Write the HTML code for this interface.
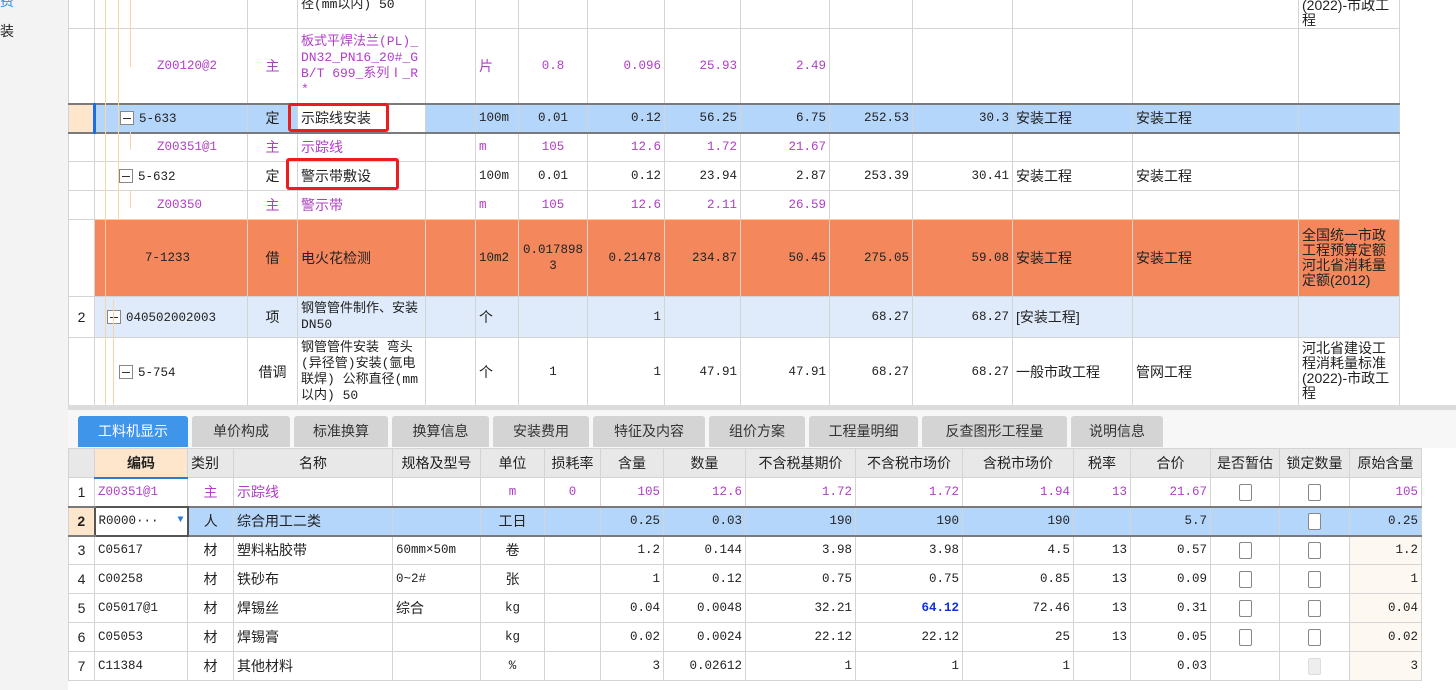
<!DOCTYPE html><html><head><meta charset="utf-8"><style>
*{margin:0;padding:0;box-sizing:border-box}
body{width:1456px;height:690px;overflow:hidden;background:#fff;position:relative;font-family:"Liberation Sans","Noto Sans CJK SC",sans-serif;font-size:14px;color:#222}
#left{position:absolute;left:0;top:0;width:68px;height:690px;background:#f3f3f3}
table{position:absolute;border-collapse:collapse;table-layout:fixed}
td{border:1px solid #d4d4d4;padding:0 3px;overflow:hidden;white-space:nowrap;line-height:16px;vertical-align:middle}
.n{text-align:right;font-family:"Liberation Mono","Noto Sans CJK SC",monospace;font-size:12.5px}
.c{text-align:center}
.w{white-space:normal;word-break:break-all;font-family:"Liberation Mono","Noto Sans CJK SC",monospace;font-size:13px}
.p{color:#b03ec6}
.sel td{background:#b5d6fb;border-top:2px solid #7a7a7a;border-bottom:2px solid #7a7a7a}
.or td{background:#f5875d}
.lb td{background:#dfeafb}
.box{display:inline-block;width:14px;height:14px;border:1px solid #888;background:#fff;vertical-align:middle;position:relative;margin-right:5px}
.box:after{content:"";position:absolute;left:2px;right:2px;top:6px;height:1px;background:#333}
.mono{font-family:"Liberation Mono","Noto Sans CJK SC",monospace;font-size:12.5px}
.cb{display:inline-block;width:13px;height:17px;border:1px solid #888;border-radius:2px;background:#fff;vertical-align:middle}
.vl{position:absolute;width:1px;background:#fcd3a5}
.red{position:absolute;border:3px solid #ee1c1c;border-radius:3px}
#tabs div{position:absolute;top:416px;height:31px;background:#d4d4d4;color:#333;font-size:14px;text-align:center;line-height:31px;border-radius:3px 3px 0 0}
</style></head><body>
<div id="left"></div>
<div style="position:absolute;left:0;top:-9px;font-size:14px;color:#3b8be0">费</div>
<div style="position:absolute;left:0;top:21px;font-size:14px">装</div>

<table style="left:68px;top:-3px;width:1331px">
<colgroup><col style="width:26px"><col style="width:153px"><col style="width:50px"><col style="width:128px"><col style="width:50px"><col style="width:43px"><col style="width:69px"><col style="width:77px"><col style="width:76px"><col style="width:89px"><col style="width:83px"><col style="width:100px"><col style="width:120px"><col style="width:166px"><col style="width:101px"></colgroup>
<tr style="height:31px"><td></td><td></td><td></td><td class="w" style="vertical-align:top;line-height:14px">径(mm以内) 50</td><td></td><td></td><td></td><td></td><td></td><td></td><td></td><td></td><td></td><td></td><td class="w" style="line-height:15px;vertical-align:bottom;font-family:'Liberation Sans','Noto Sans CJK SC',sans-serif;font-size:14px">(2022)-市政工程</td></tr>
<tr style="height:75px"><td></td><td class="mono p" style="padding-left:62px">Z00120@2</td><td class="c p">主</td><td class="w p" style="line-height:16px">板式平焊法兰(PL)_DN32_PN16_20#_GB/T 699_系列Ⅰ_R*</td><td></td><td class="p">片</td><td class="n p" style="text-align:center">0.8</td><td class="n p">0.096</td><td class="n p">25.93</td><td class="n p">2.49</td><td></td><td></td><td></td><td></td><td></td></tr>
<tr class="sel" style="height:29px"><td style="background:#fde6cc;border-right:3px solid #1e6ee0"></td><td style="padding-left:24px"><span class="box"></span><span class="mono">5-633</span></td><td class="c">定</td><td style="background:#fff">示踪线安装</td><td></td><td class="mono">100m</td><td class="n" style="text-align:center">0.01</td><td class="n">0.12</td><td class="n">56.25</td><td class="n">6.75</td><td class="n">252.53</td><td class="n">30.3</td><td>安装工程</td><td>安装工程</td><td></td></tr>
<tr style="height:29px"><td></td><td class="mono p" style="padding-left:62px">Z00351@1</td><td class="c p">主</td><td class="p">示踪线</td><td></td><td class="p mono">m</td><td class="n p" style="text-align:center">105</td><td class="n p">12.6</td><td class="n p">1.72</td><td class="n p">21.67</td><td></td><td></td><td></td><td></td><td></td></tr>
<tr style="height:29px"><td></td><td style="padding-left:24px"><span class="box"></span><span class="mono">5-632</span></td><td class="c">定</td><td>警示带敷设</td><td></td><td class="mono">100m</td><td class="n" style="text-align:center">0.01</td><td class="n">0.12</td><td class="n">23.94</td><td class="n">2.87</td><td class="n">253.39</td><td class="n">30.41</td><td>安装工程</td><td>安装工程</td><td></td></tr>
<tr style="height:29px"><td></td><td class="mono p" style="padding-left:62px">Z00350</td><td class="c p">主</td><td class="p">警示带</td><td></td><td class="p mono">m</td><td class="n p" style="text-align:center">105</td><td class="n p">12.6</td><td class="n p">2.11</td><td class="n p">26.59</td><td></td><td></td><td></td><td></td><td></td></tr>
<tr class="or" style="height:77px"><td style="background:#fff"></td><td class="mono" style="padding-left:50px">7-1233</td><td class="c">借</td><td>电火花检测</td><td></td><td class="mono">10m2</td><td class="n w" style="text-align:center;font-size:12.5px">0.0178983</td><td class="n">0.21478</td><td class="n">234.87</td><td class="n">50.45</td><td class="n">275.05</td><td class="n">59.08</td><td>安装工程</td><td>安装工程</td><td class="w" style="line-height:15px;font-family:'Liberation Sans','Noto Sans CJK SC',sans-serif;font-size:14px">全国统一市政工程预算定额河北省消耗量定额(2012)</td></tr>
<tr class="lb" style="height:41px"><td style="background:#fff" class="c">2</td><td style="padding-left:12px"><span class="box"></span><span class="mono">040502002003</span></td><td class="c">项</td><td class="w" style="line-height:16px">钢管管件制作、安装DN50</td><td></td><td>个</td><td></td><td class="n">1</td><td></td><td></td><td class="n">68.27</td><td class="n">68.27</td><td>[安装工程]</td><td></td><td></td></tr>
<tr style="height:69px"><td></td><td style="padding-left:24px"><span class="box"></span><span class="mono">5-754</span></td><td class="c">借调</td><td class="w" style="line-height:16px;vertical-align:top;padding-top:2px">钢管管件安装 弯头(异径管)安装(氩电联焊) 公称直径(mm以内) 50</td><td></td><td>个</td><td class="n" style="text-align:center">1</td><td class="n">1</td><td class="n">47.91</td><td class="n">47.91</td><td class="n">68.27</td><td class="n">68.27</td><td>一般市政工程</td><td>管网工程</td><td class="w" style="line-height:15px;vertical-align:top;padding-top:3px;font-family:'Liberation Sans','Noto Sans CJK SC',sans-serif;font-size:14px">河北省建设工程消耗量标准(2022)-市政工程</td></tr>
</table>
<div class="vl" style="left:105px;top:0;height:405px"></div>
<div class="vl" style="left:118px;top:0;height:220px"></div>
<div class="vl" style="left:130px;top:0;height:67px"></div>
<div class="vl" style="left:130px;top:132px;height:18px"></div>
<div class="vl" style="left:130px;top:190px;height:18px"></div>
<div class="vl" style="left:113px;top:300px;height:105px"></div>
<div class="red" style="left:288px;top:103px;width:101px;height:29px"></div>
<div class="red" style="left:286px;top:158px;width:113px;height:32px"></div>

<div style="position:absolute;left:68px;top:405px;width:1388px;height:5px;background:#dcdcdc"></div>
<div style="position:absolute;left:68px;top:410px;width:1388px;height:38px;background:#f7f7f7"></div>
<div id="tabs">
<div style="left:78px;width:110px;background:#3f95ea;color:#fff">工料机显示</div>
<div style="left:192px;width:98px">单价构成</div>
<div style="left:294px;width:94px">标准换算</div>
<div style="left:392px;width:97px">换算信息</div>
<div style="left:493px;width:96px">安装费用</div>
<div style="left:593px;width:112px">特征及内容</div>
<div style="left:709px;width:96px">组价方案</div>
<div style="left:809px;width:109px">工程量明细</div>
<div style="left:922px;width:145px">反查图形工程量</div>
<div style="left:1071px;width:92px">说明信息</div>
</div>

<table style="left:68px;top:448px;width:1353px">
<colgroup><col style="width:26px"><col style="width:93px"><col style="width:46px"><col style="width:159px"><col style="width:88px"><col style="width:64px"><col style="width:56px"><col style="width:63px"><col style="width:82px"><col style="width:110px"><col style="width:107px"><col style="width:111px"><col style="width:57px"><col style="width:80px"><col style="width:69px"><col style="width:70px"><col style="width:72px"></colgroup>
<tr style="height:29px;background:#e8e8e8"><td></td><td class="c" style="background:#fde6cc;font-weight:bold;border-bottom:2px solid #2a7ad8">编码</td><td>类别</td><td class="c">名称</td><td class="c">规格及型号</td><td class="c">单位</td><td class="c">损耗率</td><td class="c">含量</td><td class="c">数量</td><td class="c">不含税基期价</td><td class="c">不含税市场价</td><td class="c">含税市场价</td><td class="c">税率</td><td class="c">合价</td><td class="c">是否暂估</td><td class="c">锁定数量</td><td class="c">原始含量</td></tr>
<tr style="height:29px" class="p"><td class="c" style="color:#222">1</td><td class="mono">Z00351@1</td><td class="c">主</td><td>示踪线</td><td></td><td class="c mono">m</td><td class="c mono">0</td><td class="n">105</td><td class="n">12.6</td><td class="n">1.72</td><td class="n">1.72</td><td class="n">1.94</td><td class="n">13</td><td class="n">21.67</td><td class="c"><span class="cb"></span></td><td class="c"><span class="cb"></span></td><td class="n">105</td></tr>
<tr style="height:29px" class="sel"><td class="c" style="background:#fde6cc;font-weight:bold">2</td><td class="mono" style="background:#fff;border:2px solid #555">R0000··· <span style="color:#2a7ad8;float:right;font-size:10px">▼</span></td><td class="c">人</td><td>综合用工二类</td><td></td><td class="c">工日</td><td></td><td class="n">0.25</td><td class="n">0.03</td><td class="n">190</td><td class="n">190</td><td class="n">190</td><td></td><td class="n">5.7</td><td></td><td class="c"><span class="cb"></span></td><td class="n">0.25</td></tr>
<tr style="height:29px"><td class="c">3</td><td class="mono">C05617</td><td class="c">材</td><td>塑料粘胶带</td><td class="mono">60mm×50m</td><td class="c">卷</td><td></td><td class="n">1.2</td><td class="n">0.144</td><td class="n">3.98</td><td class="n">3.98</td><td class="n">4.5</td><td class="n">13</td><td class="n">0.57</td><td class="c"><span class="cb"></span></td><td class="c"><span class="cb"></span></td><td class="n" style="background:#fdf8f1">1.2</td></tr>
<tr style="height:29px"><td class="c">4</td><td class="mono">C00258</td><td class="c">材</td><td>铁砂布</td><td class="mono">0~2#</td><td class="c">张</td><td></td><td class="n">1</td><td class="n">0.12</td><td class="n">0.75</td><td class="n">0.75</td><td class="n">0.85</td><td class="n">13</td><td class="n">0.09</td><td class="c"><span class="cb"></span></td><td class="c"><span class="cb"></span></td><td class="n" style="background:#fdf8f1">1</td></tr>
<tr style="height:29px"><td class="c">5</td><td class="mono">C05017@1</td><td class="c">材</td><td>焊锡丝</td><td>综合</td><td class="c mono">kg</td><td></td><td class="n">0.04</td><td class="n">0.0048</td><td class="n">32.21</td><td class="n" style="color:#1030e0;font-weight:bold">64.12</td><td class="n">72.46</td><td class="n">13</td><td class="n">0.31</td><td class="c"><span class="cb"></span></td><td class="c"><span class="cb"></span></td><td class="n" style="background:#fdf8f1">0.04</td></tr>
<tr style="height:29px"><td class="c">6</td><td class="mono">C05053</td><td class="c">材</td><td>焊锡膏</td><td></td><td class="c mono">kg</td><td></td><td class="n">0.02</td><td class="n">0.0024</td><td class="n">22.12</td><td class="n">22.12</td><td class="n">25</td><td class="n">13</td><td class="n">0.05</td><td class="c"><span class="cb"></span></td><td class="c"><span class="cb"></span></td><td class="n" style="background:#fdf8f1">0.02</td></tr>
<tr style="height:29px"><td class="c">7</td><td class="mono">C11384</td><td class="c">材</td><td>其他材料</td><td></td><td class="c mono">%</td><td></td><td class="n">3</td><td class="n">0.02612</td><td class="n">1</td><td class="n">1</td><td class="n">1</td><td></td><td class="n">0.03</td><td></td><td class="c"><span class="cb" style="background:#eee;border-color:#ddd"></span></td><td class="n" style="background:#fdf8f1">3</td></tr>
</table>
</body></html>
